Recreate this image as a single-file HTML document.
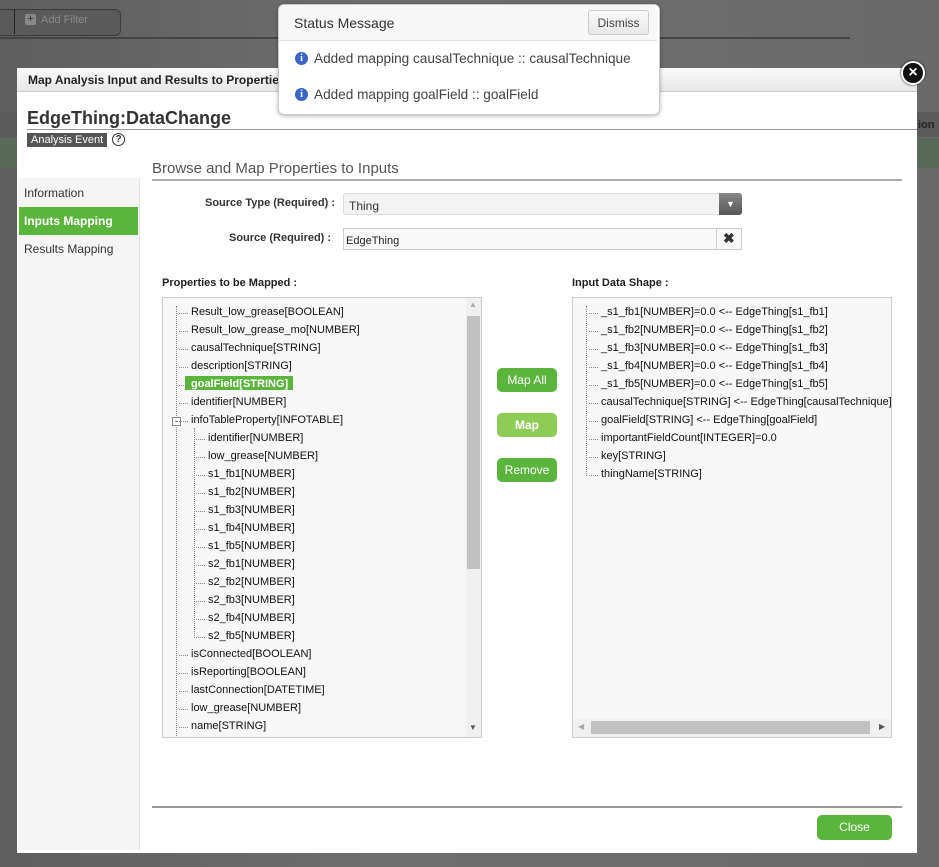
<!DOCTYPE html>
<html><head><style>
body{margin:0;width:939px;height:867px;overflow:hidden;background:linear-gradient(90deg,#5e5e5e,#6e6e6e 40%,#6a6a6a);font-family:"Liberation Sans",sans-serif;position:relative}
.abs{position:absolute}
.tree div{position:absolute;font-size:11px;color:#111;white-space:nowrap}
.tree div:before{content:"";position:absolute;left:-12px;top:7px;width:9px;border-top:1px dotted #888}
</style></head><body>
<div class="abs" style="left:0;top:9px;width:120px;height:25px;border:1px solid #3a3a3a;border-left:none;border-radius:0 6px 6px 0;background:#5a5a5a"></div>
<div class="abs" style="left:14px;top:9px;width:1px;height:25px;background:#222"></div>
<div class="abs" style="left:25px;top:14px;width:11px;height:11px;background:#888;border-radius:2px;color:#333;font-size:11px;line-height:11px;text-align:center">+</div>
<div class="abs" style="left:41px;top:14px;font-size:11px;color:#8a8a8a">Add Filter</div>
<div class="abs" style="left:0;top:37px;width:850px;height:2px;background:#444"></div>
<div class="abs" style="left:0;top:112px;width:939px;height:25px;background:#5c5c5c"></div>
<div class="abs" style="left:0;top:138px;width:939px;height:30px;background:#596a59"></div>
<div class="abs" style="left:918px;top:119px;font-size:11px;font-weight:bold;color:#222">ion</div>
<!-- dialog -->
<div class="abs" style="left:17px;top:68px;width:900px;height:785px;background:#fff"></div>
<div class="abs" style="left:17px;top:68px;width:900px;height:23px;background:linear-gradient(#fafafa,#e6e6e6);border-bottom:1px solid #ccc"></div>
<div class="abs" style="left:28px;top:73px;font-size:12px;font-weight:bold;color:#222">Map Analysis Input and Results to Properties</div>
<div class="abs" style="left:901px;top:61px;width:20px;height:20px;border-radius:50%;background:#111;border:2px solid #fff;color:#fff;font-size:16px;font-weight:bold;line-height:19px;text-align:center;box-shadow:0 0 2px #000">×</div>
<div class="abs" style="left:27px;top:108px;font-size:18px;font-weight:bold;color:#333">EdgeThing:DataChange</div>
<div class="abs" style="left:27px;top:129px;width:890px;height:1px;background:#999"></div>
<div class="abs" style="left:27px;top:133px;width:80px;height:14px;background:#555;color:#fff;font-size:11px;line-height:14px;padding-left:4px;box-sizing:border-box">Analysis Event</div>
<div class="abs" style="left:112px;top:133px;width:11px;height:11px;border:1.5px solid #333;border-radius:50%;font-size:10px;line-height:11px;text-align:center;font-weight:bold;color:#333">?</div>
<div class="abs" style="left:152px;top:160px;font-size:15px;color:#555">Browse and Map Properties to Inputs</div>
<div class="abs" style="left:152px;top:179px;width:750px;height:2px;background:#aaa"></div>
<!-- left nav -->
<div class="abs" style="left:18px;top:178px;width:121px;height:672px;background:#f5f5f5;border-right:1px solid #e4e4e4"></div>
<div class="abs" style="left:24px;top:186px;font-size:12px;color:#333">Information</div>
<div class="abs" style="left:19px;top:207px;width:119px;height:28px;background:#5bb53c"></div>
<div class="abs" style="left:24px;top:214px;font-size:12px;color:#fff;font-weight:bold">Inputs Mapping</div>
<div class="abs" style="left:24px;top:242px;font-size:12px;color:#333">Results Mapping</div>
<!-- form -->
<div class="abs" style="left:205px;top:197px;font-size:11px;font-weight:bold;color:#333">Source Type (Required) :</div>
<div class="abs" style="left:343px;top:193px;width:399px;height:22px;border:1px solid #ddd;border-radius:3px;background:#f3f3f3;box-sizing:border-box"></div>
<div class="abs" style="left:349px;top:199px;font-size:12px;color:#333">Thing</div>
<div class="abs" style="left:719px;top:193px;width:23px;height:22px;background:linear-gradient(#888,#555);border-radius:0 3px 3px 0;color:#fff;font-size:9px;text-align:center;line-height:22px">▼</div>
<div class="abs" style="left:229px;top:232px;font-size:11px;font-weight:bold;color:#333">Source (Required) :</div>
<div class="abs" style="left:343px;top:228px;width:399px;height:22px;border:1px solid #ccc;background:#f8f8f8;box-sizing:border-box"></div>
<div class="abs" style="left:716px;top:228px;width:1px;height:22px;background:#ccc"></div>
<div class="abs" style="left:346px;top:235px;font-size:11px;color:#222">EdgeThing</div>
<div class="abs" style="left:723px;top:230px;font-size:14px;font-weight:bold;color:#333">✖</div>
<div class="abs" style="left:162px;top:277px;font-size:11px;font-weight:bold;color:#222">Properties to be Mapped :</div>
<div class="abs" style="left:572px;top:277px;font-size:11px;font-weight:bold;color:#222">Input Data Shape :</div>
<!-- left tree -->
<div class="abs" style="left:162px;top:297px;width:320px;height:441px;border:1px solid #ccc;background:#f7f7f7;box-sizing:border-box;overflow:hidden">
<div class="abs" style="left:303px;top:0;width:15px;height:439px;background:#f0f0f0"></div>
<div class="abs" style="left:304px;top:18px;width:13px;height:253px;background:#c1c1c1"></div>
<div class="abs" style="left:306px;top:2px;font-size:8px;color:#aaa">▲</div>
<div class="abs" style="left:306px;top:425px;font-size:8px;color:#555">▼</div>
<div class="abs" style="left:13px;top:8px;height:440px;border-left:1px dotted #888"></div>
<div class="abs" style="left:31px;top:130px;height:210px;border-left:1px dotted #888"></div>
<div class="abs" style="left:22px;top:78px;width:108px;height:14px;background:#5bb53c"></div>
<div class="abs" style="left:9px;top:119px;width:7px;height:7px;border:1px solid #888;background:#fff;font-size:9px;line-height:7px;text-align:center">-</div>
</div>
<div class="abs tree" style="left:191px;top:306px;width:280px">
<div style="top:0">Result_low_grease[BOOLEAN]</div>
<div style="top:18px">Result_low_grease_mo[NUMBER]</div>
<div style="top:36px">causalTechnique[STRING]</div>
<div style="top:54px">description[STRING]</div>
<div style="top:72px;color:#fff;font-weight:bold">goalField[STRING]</div>
<div style="top:90px">identifier[NUMBER]</div>
<div style="top:108px">infoTableProperty[INFOTABLE]</div>
<div style="top:126px;left:17px">identifier[NUMBER]</div>
<div style="top:144px;left:17px">low_grease[NUMBER]</div>
<div style="top:162px;left:17px">s1_fb1[NUMBER]</div>
<div style="top:180px;left:17px">s1_fb2[NUMBER]</div>
<div style="top:198px;left:17px">s1_fb3[NUMBER]</div>
<div style="top:216px;left:17px">s1_fb4[NUMBER]</div>
<div style="top:234px;left:17px">s1_fb5[NUMBER]</div>
<div style="top:252px;left:17px">s2_fb1[NUMBER]</div>
<div style="top:270px;left:17px">s2_fb2[NUMBER]</div>
<div style="top:288px;left:17px">s2_fb3[NUMBER]</div>
<div style="top:306px;left:17px">s2_fb4[NUMBER]</div>
<div style="top:324px;left:17px">s2_fb5[NUMBER]</div>
<div style="top:342px">isConnected[BOOLEAN]</div>
<div style="top:360px">isReporting[BOOLEAN]</div>
<div style="top:378px">lastConnection[DATETIME]</div>
<div style="top:396px">low_grease[NUMBER]</div>
<div style="top:414px">name[STRING]</div>
</div>
<!-- buttons -->
<div class="abs" style="left:497px;top:368px;width:60px;height:24px;background:#5bb53c;border-radius:5px;color:#fff;font-size:12px;line-height:24px;text-align:center">Map All</div>
<div class="abs" style="left:497px;top:413px;width:60px;height:24px;background:#8fcc57;border-radius:5px;color:#fff;font-size:12px;font-weight:bold;line-height:24px;text-align:center">Map</div>
<div class="abs" style="left:497px;top:458px;width:60px;height:24px;background:#5bb53c;border-radius:5px;color:#fff;font-size:12px;line-height:24px;text-align:center">Remove</div>
<!-- right tree -->
<div class="abs" style="left:572px;top:297px;width:320px;height:441px;border:1px solid #ccc;background:#f7f7f7;box-sizing:border-box;overflow:hidden">
<div class="abs" style="left:13px;top:8px;height:170px;border-left:1px dotted #888"></div>
<div class="abs" style="left:0;top:421px;width:318px;height:18px;background:#f0f0f0"></div>
<div class="abs" style="left:18px;top:423px;width:279px;height:13px;background:#c1c1c1"></div>
<div class="abs" style="left:5px;top:424px;font-size:8px;color:#aaa">◀</div>
<div class="abs" style="left:306px;top:424px;font-size:8px;color:#555">▶</div>
</div>
<div class="abs tree" style="left:601px;top:306px;width:290px">
<div style="top:0">_s1_fb1[NUMBER]=0.0 &lt;-- EdgeThing[s1_fb1]</div>
<div style="top:18px">_s1_fb2[NUMBER]=0.0 &lt;-- EdgeThing[s1_fb2]</div>
<div style="top:36px">_s1_fb3[NUMBER]=0.0 &lt;-- EdgeThing[s1_fb3]</div>
<div style="top:54px">_s1_fb4[NUMBER]=0.0 &lt;-- EdgeThing[s1_fb4]</div>
<div style="top:72px">_s1_fb5[NUMBER]=0.0 &lt;-- EdgeThing[s1_fb5]</div>
<div style="top:90px">causalTechnique[STRING] &lt;-- EdgeThing[causalTechnique]</div>
<div style="top:108px">goalField[STRING] &lt;-- EdgeThing[goalField]</div>
<div style="top:126px">importantFieldCount[INTEGER]=0.0</div>
<div style="top:144px">key[STRING]</div>
<div style="top:162px">thingName[STRING]</div>
</div>
<div class="abs" style="left:152px;top:806px;width:750px;height:2px;background:#999"></div>
<div class="abs" style="left:817px;top:815px;width:75px;height:25px;background:#5bb53c;border-radius:5px;color:#fff;font-size:12px;line-height:25px;text-align:center">Close</div>
<!-- status popup -->
<div class="abs" style="left:278px;top:4px;width:380px;height:109px;background:#fff;border:1px solid #ccc;border-radius:6px;box-shadow:0 1px 4px rgba(0,0,0,.3)"></div>
<div class="abs" style="left:279px;top:5px;width:378px;height:35px;background:#f7f7f7;border-bottom:1px solid #e2e2e2;border-radius:6px 6px 0 0"></div>
<div class="abs" style="left:294px;top:15px;font-size:14px;color:#333">Status Message</div>
<div class="abs" style="left:588px;top:10px;width:61px;height:25px;border:1px solid #ccc;border-radius:3px;background:linear-gradient(#fafafa,#e8e8e8);font-size:12px;color:#444;line-height:25px;text-align:center;box-sizing:border-box">Dismiss</div>
<div class="abs" style="left:295px;top:52px;width:13px;height:13px;border-radius:50%;background:#3a64c8;color:#fff;font-size:10px;font-weight:bold;line-height:13px;text-align:center;font-family:'Liberation Serif',serif">i</div>
<div class="abs" style="left:314px;top:51px;font-size:13.6px;color:#444">Added mapping causalTechnique :: causalTechnique</div>
<div class="abs" style="left:295px;top:88px;width:13px;height:13px;border-radius:50%;background:#3a64c8;color:#fff;font-size:10px;font-weight:bold;line-height:13px;text-align:center;font-family:'Liberation Serif',serif">i</div>
<div class="abs" style="left:314px;top:87px;font-size:13.6px;color:#444">Added mapping goalField :: goalField</div>
</body></html>
